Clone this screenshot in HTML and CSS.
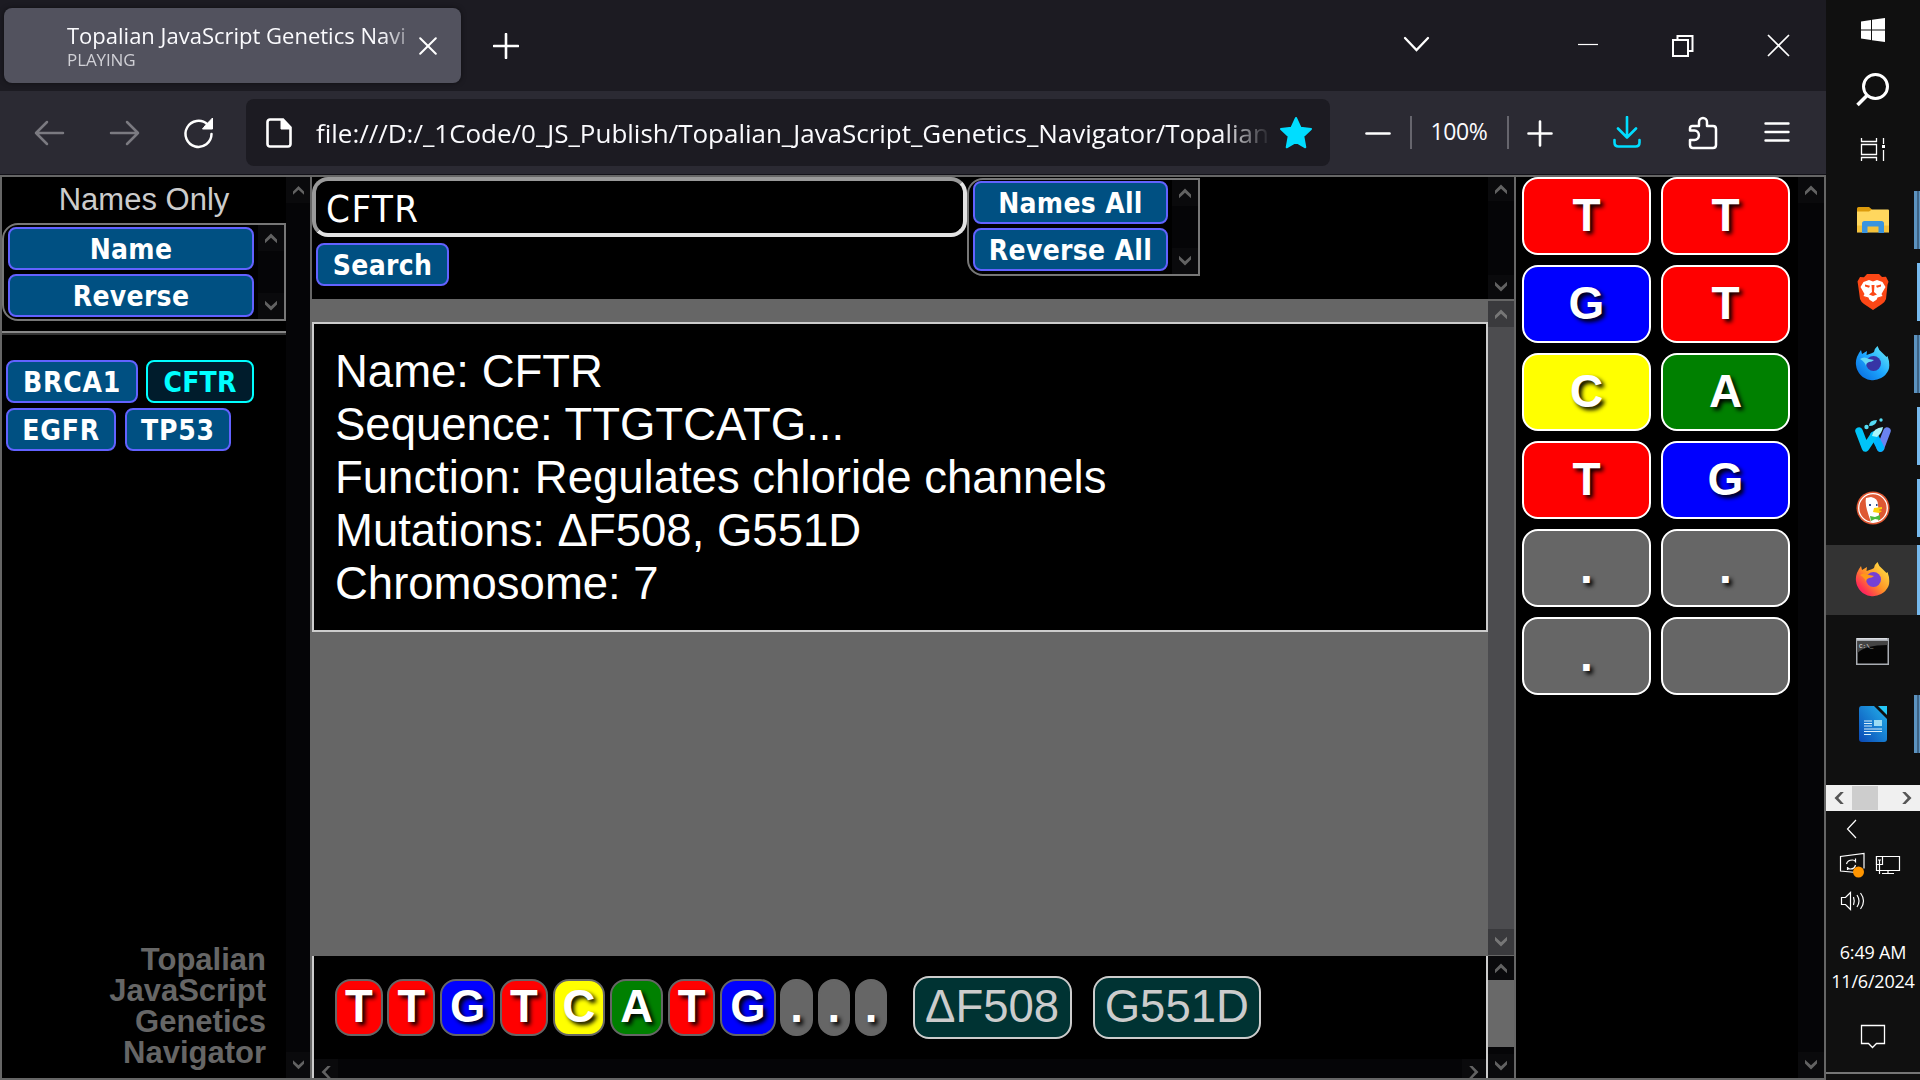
FILE: index.html
```html
<!DOCTYPE html>
<html lang="en">
<head>
<meta charset="utf-8">
<title>Topalian JavaScript Genetics Navigator</title>
<link rel="stylesheet" href="styles.css">
</head>
<body>
<svg width="0" height="0" class="defs">
  <symbol id="up" viewBox="0 0 12 12"><path d="M0 7.5 6 1.5l6 6v3.8L6 5.8 0 11.3z"/></symbol>
  <symbol id="down" viewBox="0 0 12 12"><path d="M0 .7 6 6.2 12 .7v3.8l-6 6-6-6z"/></symbol>
  <symbol id="left" viewBox="0 0 12 12"><path d="M7.5 0 1.5 6l6 6h3.3L5.300 6l5.500-6z"/></symbol>
  <symbol id="right" viewBox="0 0 12 12"><path d="M4.500 0l6 6-6 6H1.200L6.700 6 1.200 0z"/></symbol>
</svg>
<div class="desktop">
  <div class="browser">
    <header class="tabstrip">
      <div class="tab">
        <div class="tab-text"><div class="tab-title">Topalian JavaScript Genetics Navi</div><div class="tab-sub">PLAYING</div></div>
        <svg class="tab-close" width="18" height="18" viewBox="0 0 18 18"><path d="M1.200 1.200l15.600 15.600M16.800 1.200L1.200 16.800"/></svg>
      </div>
      <svg class="newtab" width="26" height="26" viewBox="0 0 26 26"><path d="M13 1v24M1 13h24"/></svg>
      <svg class="winctl" width="400" height="30" viewBox="0 0 400 30"><g fill="none" stroke="#fff"><path d="M7 9l11.500 12L30 9" stroke-width="2.300" stroke-linecap="round"/><path d="M180 15.500h20" stroke-width="1.200"/><path d="M275 11h15v16h-15zM279.500 11V7h15v15h-4.500" stroke-width="2"/><path d="M370 6l21 21M391 6l-21 21" stroke-width="1.700"/></g></svg>
    </header>
    <div class="toolbar">
      <svg class="nav" width="190" height="34" viewBox="0 0 190 34"><g fill="none" stroke-width="2.500" stroke-linecap="round" stroke-linejoin="round"><g stroke="#7b7a81"><path d="M29 17H2M13 6 2 17l11 11"/><path d="M77 17h27M93 6l11 11-11 11"/></g><path d="M173.500 8.500A13 13 0 1 0 177.500 18" stroke="#fff"/></g><path d="M178.500 2v11h-10l3-3.700z" fill="#fff" stroke="#fff" stroke-linejoin="round"/></svg>
      <div class="urlbar">
        <svg width="26" height="30" viewBox="0 0 26 30"><path d="M4 1.500h13l7.500 8V26a2.500 2.500 0 0 1-2.500 2.500H4A2.500 2.500 0 0 1 1.500 26V4A2.500 2.500 0 0 1 4 1.500z" fill="none" stroke="#fff" stroke-width="2.600"/><path d="M15 1v10h10z" fill="#fff" stroke="#fff"/></svg>
        <div class="url">file:///D:/_1Code/0_JS_Publish/Topalian_JavaScript_Genetics_Navigator/Topalian</div>
        <svg class="star" width="34" height="34" viewBox="0 0 34 34"><path d="M17 2l4.500 9.700 10.500 1.300-7.700 7.300 2 11L17 26l-9.300 5.300 2-11L2 13l10.500-1.300z" fill="#00ddff" stroke="#00ddff" stroke-width="2" stroke-linejoin="round"/></svg>
      </div>
      <div class="tools">
        <svg width="26" height="34" viewBox="0 0 26 34"><path d="M1.500 17.500h23" stroke="#fff" stroke-width="2.600" stroke-linecap="round"/></svg>
        <i class="sep s1"></i><span class="zoom">100%</span><i class="sep s2"></i>
        <svg width="26" height="34" viewBox="0 0 26 34"><path d="M1.500 17.500h23M13 5.500v24" stroke="#fff" stroke-width="2.600" stroke-linecap="round"/></svg>
        <svg class="dl" width="30" height="34" viewBox="0 0 30 34"><path d="M15 1v20M6 12.500l9 9 9-9M2.500 24v2.500q0 4 4 4h17q4 0 4-4V24" fill="none" stroke="#00ddff" stroke-width="2.600" stroke-linecap="round" stroke-linejoin="round"/></svg>
        <svg class="puz" width="30" height="34" viewBox="0 0 30 34"><path d="M2 14v-1.500q0-2.500 2.500-2.500H11V6a4 4 0 0 1 8 0v4h6q3 0 3 3v16q0 3-3 3H5q-3 0-3-3v-5h4.500a3.700 4 0 0 0 0-9.500H2z" fill="none" stroke="#fff" stroke-width="2.500" stroke-linejoin="round"/></svg>
        <svg class="menu" width="26" height="34" viewBox="0 0 26 34"><path d="M1.500 7.500h23M1.500 16h23M1.500 24.500h23" stroke="#fff" stroke-width="2.400" stroke-linecap="round"/></svg>
      </div>
    </div>
    <main class="app">
      <aside class="names">
        <div class="names-body">
          <div class="names-top">
            <h2>Names Only</h2>
            <div class="btnbox sortbox"><div class="stack"><button>Name</button><button>Reverse</button></div><div class="sb"><svg><use href="#up"/></svg><svg><use href="#down"/></svg></div></div>
          </div>
          <div class="genes"><button class="g1">BRCA1</button><button class="on">CFTR</button><button class="g3">EGFR</button><button class="g4">TP53</button></div>
          <div class="brand">Topalian<br>JavaScript<br>Genetics<br>Navigator</div>
        </div>
        <div class="sb"><svg><use href="#up"/></svg><svg><use href="#down"/></svg></div>
      </aside>
      <section class="center">
        <div class="searchpane">
          <div class="search-col"><div class="field">CFTR</div><button>Search</button></div>
          <div class="btnbox allbox"><div class="stack"><button>Names All</button><button>Reverse All</button></div><div class="sb"><svg><use href="#up"/></svg><svg><use href="#down"/></svg></div></div>
          <div class="sb short end"><svg><use href="#up"/></svg><svg><use href="#down"/></svg></div>
        </div>
        <div class="result">
          <div class="card"><div>Name: CFTR</div><div>Sequence: TTGTCATG...</div><div>Function: Regulates chloride channels</div><div>Mutations: ΔF508, G551D</div><div>Chromosome: 7</div></div>
          <div class="sb light"><svg><use href="#up"/></svg><svg><use href="#down"/></svg></div>
        </div>
        <div class="seqpane">
          <div class="seq">
            <div class="chips">
              <span class="chip t">T</span><span class="chip t">T</span><span class="chip g">G</span><span class="chip t">T</span><span class="chip c">C</span><span class="chip a">A</span><span class="chip t">T</span><span class="chip g">G</span><span class="chip d">.</span><span class="chip d">.</span><span class="chip d">.</span>
              <span class="mut">ΔF508</span><span class="mut">G551D</span>
            </div>
            <div class="hsb"><svg><use href="#left"/></svg><svg><use href="#right"/></svg></div>
          </div>
          <div class="sb short thumbed"><svg><use href="#up"/></svg><i></i><svg><use href="#down"/></svg></div>
        </div>
      </section>
      <aside class="bases">
        <div class="tiles">
          <div class="t">T</div><div class="t">T</div><div class="g">G</div><div class="t">T</div><div class="c">C</div><div class="a">A</div><div class="t">T</div><div class="g">G</div><div class="d">.</div><div class="d">.</div><div class="d">.</div><div class="d"></div>
        </div>
        <div class="sb"><svg><use href="#up"/></svg><svg><use href="#down"/></svg></div>
      </aside>
    </main>
  </div>
  <nav class="taskbar">
    <svg class="sys" width="94" height="184" viewBox="0 0 94 184"><g fill="#fff"><path d="M35 21.500l10-1.500v9.500H35zM46 19.800l13-1.800v11.500H46zM35 30.500h10V40l-10-1.500zM46 30.500h13V42l-13-1.800z"/></g><ellipse cx="49.500" cy="86.500" rx="12" ry="12" fill="none" stroke="#fff" stroke-width="3"/><path d="M41.500 95L31.500 105" stroke="#fff" stroke-width="3.500"/><path d="M35.500 138v3.500h15V138M35.500 161v-3.500h15v3.500M35.500 144.500h15v10h-15zM57.500 138v6M57.500 150v11" fill="none" stroke="#fff" stroke-width="1.300"/><path d="M56 145h3v3h-3z" fill="#fff"/></svg>
    <div class="task dbl"><svg viewBox="0 0 36 36"><g transform="translate(0 1.500)"><path d="M2 5q0-1.500 1.500-1.500H14l3 2.500v5H2z" fill="#dc9b0c"/><path d="M2 8h12l3-2h16q1 0 1 1v22H2z" fill="#ffd75e"/><path d="M2 22h32v6.500H2z" fill="#f5c23a"/><path d="M7 29.500V20q0-2.500 2.500-2.500h17Q29 17.500 29 20v9.500h-5.500V23h-11v6.500z" fill="#3994df"/></g></svg></div>
    <div class="task one"><svg viewBox="0 0 36 36"><path d="M12 0h12l3 3 4-.3 2.500 5-1 3L31 25q-1 3-4 5l-9 6-9-6q-3-2-4-5L3 10.500l-.5-3L5 3l4 .3z" fill="#fc4716"/><path d="M18 7.500L22 6l5.500 2 3 5-4 7 1 2-9.500 6-9.500-6 1-2-4-7 3-5L14 6z" fill="#fff"/><path d="M10 10.500l5 1.200-1 2-4-1.200zM26 10.500l-5 1.200 1 2 4-1.200zM16.500 11h3l-.5 7 3 2.500-4 1.500-4-1.500 3-2.500zM8.500 22l5 1.500 1.500 4zM27.500 22l-5 1.500-1.500 4z" fill="#fc4716"/></svg></div>
    <div class="task dbl up"><svg viewBox="0 0 36 36"><defs><linearGradient id="fd" x1="1" y1="0" x2="0" y2="1"><stop offset="0" stop-color="#6ff3f5"/><stop offset=".5" stop-color="#1da7ff"/><stop offset="1" stop-color="#0562d9"/></linearGradient></defs><path d="M22.500 1q1 4 5 7l4 4 1-1q3 8 1 14A17 17 0 0 1 1 20Q0 13 6 5l1 4 5-3-.5 4Q18 8 19 7q0-3 3.500-6z" fill="url(#fd)"/><circle cx="18.500" cy="18.500" r="7.500" fill="#3735a5"/><path d="M5 14q4-3 9 0l5 1q-2 2-5 2-3 1-3 4-1-4-6-7z" fill="#65d9f5"/></svg></div>
    <div class="task one"><svg viewBox="0 0 36 36"><g fill="none" stroke-width="7.500" stroke-linecap="round" stroke-linejoin="round"><path d="M25.500 30L32 13" stroke="#6a83ef"/><path d="M19 17l6.500 13" stroke="#00b5ff"/><path d="M4 13l6.500 17 8-12" stroke="#00c4f8"/></g><path d="M17 18q1-8 11-9-1 6-6 10z" fill="#a9f6fa"/><circle cx="11.500" cy="9" r="2.200" fill="#55ddf5"/><path d="M14 8q0-6 8-6-1 6-8 6z" fill="#55ddf5"/><circle cx="26" cy="2" r="1.700" fill="#55ddf5"/></svg></div>
    <div class="task one"><svg viewBox="0 0 36 36"><circle cx="18" cy="18" r="16.500" fill="#de5833"/><circle cx="18" cy="18" r="14.300" fill="none" stroke="#fff" stroke-width="1.300"/><path d="M11 8l5-1q7 1 7 8l1 9-1 8h-7q-2-5-4-12-2-7-1-12z" fill="#fff"/><path d="M19 18l8-1v2l-4 1 4 1-3 2-6-1z" fill="#fdd20a"/><path d="M15 26l5 1 5-2v5l-5-1-4 2z" fill="#4cba3c"/><path d="M14 14h2v2h-2zM21 14h1.500v2H21z" fill="#2d4f8e"/></svg></div>
    <div class="task active one up"><svg viewBox="0 0 36 36"><defs><linearGradient id="ff" x1="1" y1="0" x2="0" y2="1"><stop offset="0" stop-color="#fff44f"/><stop offset=".5" stop-color="#ff9425"/><stop offset=".8" stop-color="#ff2d55"/><stop offset="1" stop-color="#e31587"/></linearGradient></defs><path d="M22.500 1q1 4 5 7l4 4 1-1q3 8 1 14A17 17 0 0 1 1 20Q0 13 6 5l1 4 5-3-.5 4Q18 8 19 7q0-3 3.500-6z" fill="url(#ff)"/><circle cx="18.500" cy="18.500" r="7.500" fill="#7540d5"/><path d="M5 14q4-3 9 0l5 1q-2 2-5 2-3 1-3 4-1-4-6-7z" fill="#ff9819"/></svg></div>
    <div class="task up"><svg viewBox="0 0 36 36"><path d="M1 5h33v27H1z" fill="#a9adb3"/><path d="M2.500 8h30v22.500h-30z" fill="#050505"/><path d="M2.500 8h30v4Q10 12 2.500 20z" fill="#444"/><path d="M2 5.800h30" stroke="#e5e8ec" stroke-width="1.300"/><text x="4" y="15" font-size="6">C:\_</text></svg></div>
    <div class="task dbl"><svg viewBox="0 0 36 36"><defs><linearGradient id="wr" x1="1" y1="0" x2="0" y2="1"><stop offset="0" stop-color="#24b3ec"/><stop offset="1" stop-color="#0a48b5"/></linearGradient></defs><path d="M6.500 0H19l13 13v20q0 3-3 3H7q-3 0-3-3V3q0-3 2.500-3z" fill="url(#wr)"/><path d="M23 0h9v9z" fill="#25c8f7"/><path d="M9 15h8M9 17.500h8M9 20h8M9 23h18M9 25.500h18M9 28.500h7" stroke="#d9eefb"/><path d="M19 14h8v6h-8z" fill="#9bdcf5"/></svg></div>
    <div class="taskscroll"><svg><use href="#left"/></svg><i></i><svg><use href="#right"/></svg></div>
    <svg class="tray" width="94" height="110" viewBox="0 0 94 110"><g fill="none" stroke="#fff" stroke-width="1.200"><path d="M30 9l-8.500 9L30 27"/><path d="M36 62l-21.500-2V45.500L38 42.500v15M20.500 53q1-4 6-4 2 0 3 1.500v-3M29.500 54q-1 4-5 4-3 0-3-2v3M50.500 45.500h23v14h-23zM56 62.500h12M62 59.500v3M53.500 54v9"/><path d="M50.500 45.500h6v8h-6z" fill="#101010"/><path d="M52 49h3M53.500 49v4"/><path d="M15.500 86.500h4l5-5v17l-5-5h-4zM27.500 86q1.500 4 0 8M31 84q4 6 0 12M34.500 82q6 8 0 16"/></g><circle cx="32.500" cy="61" r="5.500" fill="#ff9500"/></svg>
    <div class="clock"><div>6:49 AM</div><div class="date">11/6/2024</div></div>
    <svg class="note" width="26" height="26" viewBox="0 0 26 26"><path d="M1.500 1.500h23v18h-8l-4 4-4-4h-7z" fill="none" stroke="#fff" stroke-width="1.300"/></svg>
    <div class="edge"></div>
  </nav>
</div>
</body>
</html>
```
FILE: styles.css
```css
* { box-sizing: border-box; }
body { margin: 0; background: #000; overflow: hidden; font-family: "Liberation Sans", Arial, sans-serif; }
svg { display: block; flex: none; }
.defs { position: absolute; }
.desktop { display: flex; width: 1920px; height: 1080px; }
.browser { width: 1826px; display: flex; flex-direction: column; }

/* browser chrome */
.tabstrip { height: 91px; background: #1c1b22; display: flex; padding: 8px 0 0 4px; font-family: "Open Sans", sans-serif; }
.tab { flex: none; width: 457px; height: 75px; border-radius: 8px; background: #52525e; color: #fbfbfe; display: flex; padding-left: 63px; box-shadow: 0 0 5px rgba(0, 0, 0, .5); }
.tab-text { width: 347px; padding-top: 13px; white-space: nowrap; -webkit-mask-image: linear-gradient(to right, #000 315px, transparent 355px); mask-image: linear-gradient(to right, #000 315px, transparent 355px); }
.tab-title { font-size: 22px; line-height: 28px; }
.tab-sub { font-size: 17px; line-height: 22px; color: #d0d0d6; letter-spacing: -.1px; }
.tab-close { margin: 29px 0 0 5px; stroke: #fff; stroke-width: 2; stroke-linecap: round; }
.newtab { margin: 25px 0 0 32px; stroke: #fff; stroke-width: 2.6; stroke-linecap: round; }
.winctl { margin: 21px 0 0 879px; }
.toolbar { height: 84px; background: #2b2a33; border-bottom: 1px solid #121118; display: flex; font-family: "Open Sans", sans-serif; color: #fbfbfe; }
.nav { margin: 25px 0 0 34px; }
.urlbar { margin: 8px 0 0 22px; width: 1084px; height: 67px; border-radius: 8px; background: #1c1b22; display: flex; align-items: center; padding-left: 20px; }
.url { width: 952px; margin-left: 24px; font-size: 26px; line-height: 34px; letter-spacing: -.02px; white-space: nowrap; -webkit-mask-image: linear-gradient(to right, #000 905px, transparent 955px); mask-image: linear-gradient(to right, #000 905px, transparent 955px); }
.star { margin-left: 11px; }
.tools { display: flex; padding-top: 25px; margin-left: 35px; height: 59px; }
.sep { background: #66656d; width: 2px; height: 33px; }
.s1 { margin: 0 18px 0 19px; }
.s2 { margin: 0 18px 0 19px; }
.zoom { width: 58px; font-size: 23px; line-height: 30px; text-align: center; white-space: nowrap; letter-spacing: -.4px; }
.dl { margin-left: 59px; }
.puz { margin-left: 46px; }
.menu { margin-left: 46px; }

/* page */
.app { height: 905px; display: grid; grid-template-columns: 308px 1202px 308px; gap: 2px; padding: 2px; background: #666; }
.names, .bases { display: flex; background: #000; }
.sb { width: 26px; flex: none; background: #050507; display: flex; flex-direction: column; justify-content: space-between; align-items: stretch; fill: #626262; }
.sb svg { width: 100%; height: 26px; padding: 7px; background: #0a0a0c; }
.short svg { height: 24px; padding: 6px 7px; }
button { display: block; height: 43px; border: 2px solid #6262ff; border-radius: 8px; background: #005082; color: #fff; font: bold 28px/36px "DejaVu Sans Condensed", "DejaVu Sans", sans-serif; font-stretch: condensed; letter-spacing: .3px; text-align: center; padding: 2px 0 0; white-space: nowrap; }
.btnbox { display: flex; border: 2px solid #777; border-radius: 16px 0 0 16px; height: 98px; }
.stack { display: flex; flex-direction: column; gap: 4px; padding: 2px 0 0 4px; }
.names-body { width: 284px; display: flex; flex-direction: column; }
.names > .sb { width: 24px; }
.names > .sb svg { padding: 7px 6px 7px 7px; }
.names-top { height: 158px; border-bottom: 4px ridge #888; }
.names-top h2 { margin: 0; height: 46px; font-size: 31px; line-height: 46px; font-weight: normal; color: #ccc; text-align: center; }
.sortbox .stack { width: 250px; }
.sortbox .sb { margin-left: 4px; }
.genes { display: flex; flex-wrap: wrap; align-content: flex-start; gap: 5px 8px; padding: 25px 0 0 4px; }
.genes button { letter-spacing: .8px; }
.g1 { width: 132px; }
.genes .on { width: 108px; background: #001c2c; border-color: #0ff; color: #0ff; letter-spacing: .2px; }
.g3 { width: 110px; }
.g4 { width: 106px; margin-left: 1px; }
.brand { margin-top: auto; padding: 0 20px 10px 0; font-weight: bold; font-size: 31px; line-height: 31px; color: #666; text-align: right; }
.center { display: grid; grid-template-rows: 122px 655px 122px; gap: 1px; min-width: 0; }
.searchpane { display: flex; background: #000; }
.search-col { width: 655px; display: flex; flex-direction: column; align-items: flex-start; gap: 6px; }
.search-col button { width: 133px; margin-left: 4px; }
.field { width: 655px; height: 60px; border: 4px solid; border-color: #999 #e3e3e3 #e3e3e3 #999; border-radius: 16px; color: #fff; padding-left: 10px; font: 38px/56px "DejaVu Sans Condensed", "DejaVu Sans", sans-serif; font-stretch: condensed; letter-spacing: 1.5px; }
.allbox { width: 233px; margin-top: 1px; }
.allbox .stack { width: 199px; padding-top: 1px; }
.allbox .sb { margin-left: 4px; }
.end { margin-left: auto; }
.result { display: flex; background: #666; padding-top: 1px; }
.card { width: 1176px; height: 310px; margin-top: 21px; border: 2px solid #ccc; background: #000; color: #fff; padding: 21px 21px; font-size: 45.5px; line-height: 53px; white-space: nowrap; }
.light { background: #4c4c4f; fill: #777; }
.light svg { background: #3a3a3d; }
.seqpane { display: flex; background: #000; }
.seq { width: 1176px; border: solid #ccc; border-width: 0 2px; display: flex; flex-direction: column; }
.chips { height: 103px; padding: 0 0 0 21px; display: flex; align-items: center; gap: 4.7px; color: #fff; }
.chip { width: 47.8px; height: 57px; border: 2px solid #666; border-radius: 16px; font: bold 45.5px/52px "Liberation Sans", Arial, sans-serif; text-align: center; text-shadow: 3px 3px 4px #000; }
.chip.g { width: 55.4px; }
.chip.c, .chip.a { width: 52.9px; }
.chip.d { width: 32.6px; }
.mut { height: 63px; border: 2px solid #ccc; border-radius: 16px; background: #033; color: #ccc; font-size: 45.5px; line-height: 58px; width: 159px; text-align: center; margin-left: 20.5px; }
.mut + .mut { width: 168px; margin-left: 16.5px; }
.hsb { height: 19px; display: flex; justify-content: space-between; background: #050507; fill: #626262; overflow: hidden; }
.hsb svg { width: 24px; height: 26px; padding: 7px 5px; background: #0a0a0c; }
.thumbed i { height: 67px; background: #696969; margin-bottom: auto; }
.t { background: #f00; }
.g { background: #00f; }
.c { background: #ff0; }
.a { background: #008000; }
.d { background: #666; }
.tiles { width: 282px; padding-left: 6px; display: grid; grid-template-columns: 129px 129px; grid-auto-rows: 78px; align-content: start; gap: 10px; }
.tiles div { border: 2px solid #fff; border-radius: 16px; color: #fff; font-weight: bold; font-size: 46px; line-height: 72px; text-align: center; text-shadow: 3px 3px 4px #000; }

/* taskbar */
.taskbar { width: 94px; background: #101010; display: flex; flex-direction: column; color: #fff; }
.task { height: 72px; display: flex; align-items: center; justify-content: space-between; padding-left: 29px; }
.task svg { width: 36px; height: 36px; }
.up svg { margin-bottom: 2px; }
.task text { fill: #eee; font-family: "Liberation Mono", monospace; }
.task::after { content: ""; height: 58px; }
.one::after { width: 3px; background: #76b9ed; }
.dbl::after { width: 6px; background: linear-gradient(to right, #5c93c0 3px, #3e6385 3px 5px, #5c93c0 5px); }
.active { height: 70px; margin: 1px 0; background: #333; }
.active::after { height: 70px; }
.taskscroll { height: 26px; margin-top: 25px; background: #f0f0f0; display: flex; fill: #555; }
.taskscroll svg { width: 26px; height: 26px; padding: 7px; }
.taskscroll i { width: 26px; margin: 1px 16px 1px 0; background: #cdcdcd; }
.clock { margin-top: 17px; height: 86px; font: 18px/29px "Open Sans", sans-serif; text-align: center; letter-spacing: -.2px; }
.date { white-space: nowrap; }
.note { margin: 0 0 0 34px; }
.edge { margin-top: auto; height: 8px; border-top: 2px solid #777; }
```
